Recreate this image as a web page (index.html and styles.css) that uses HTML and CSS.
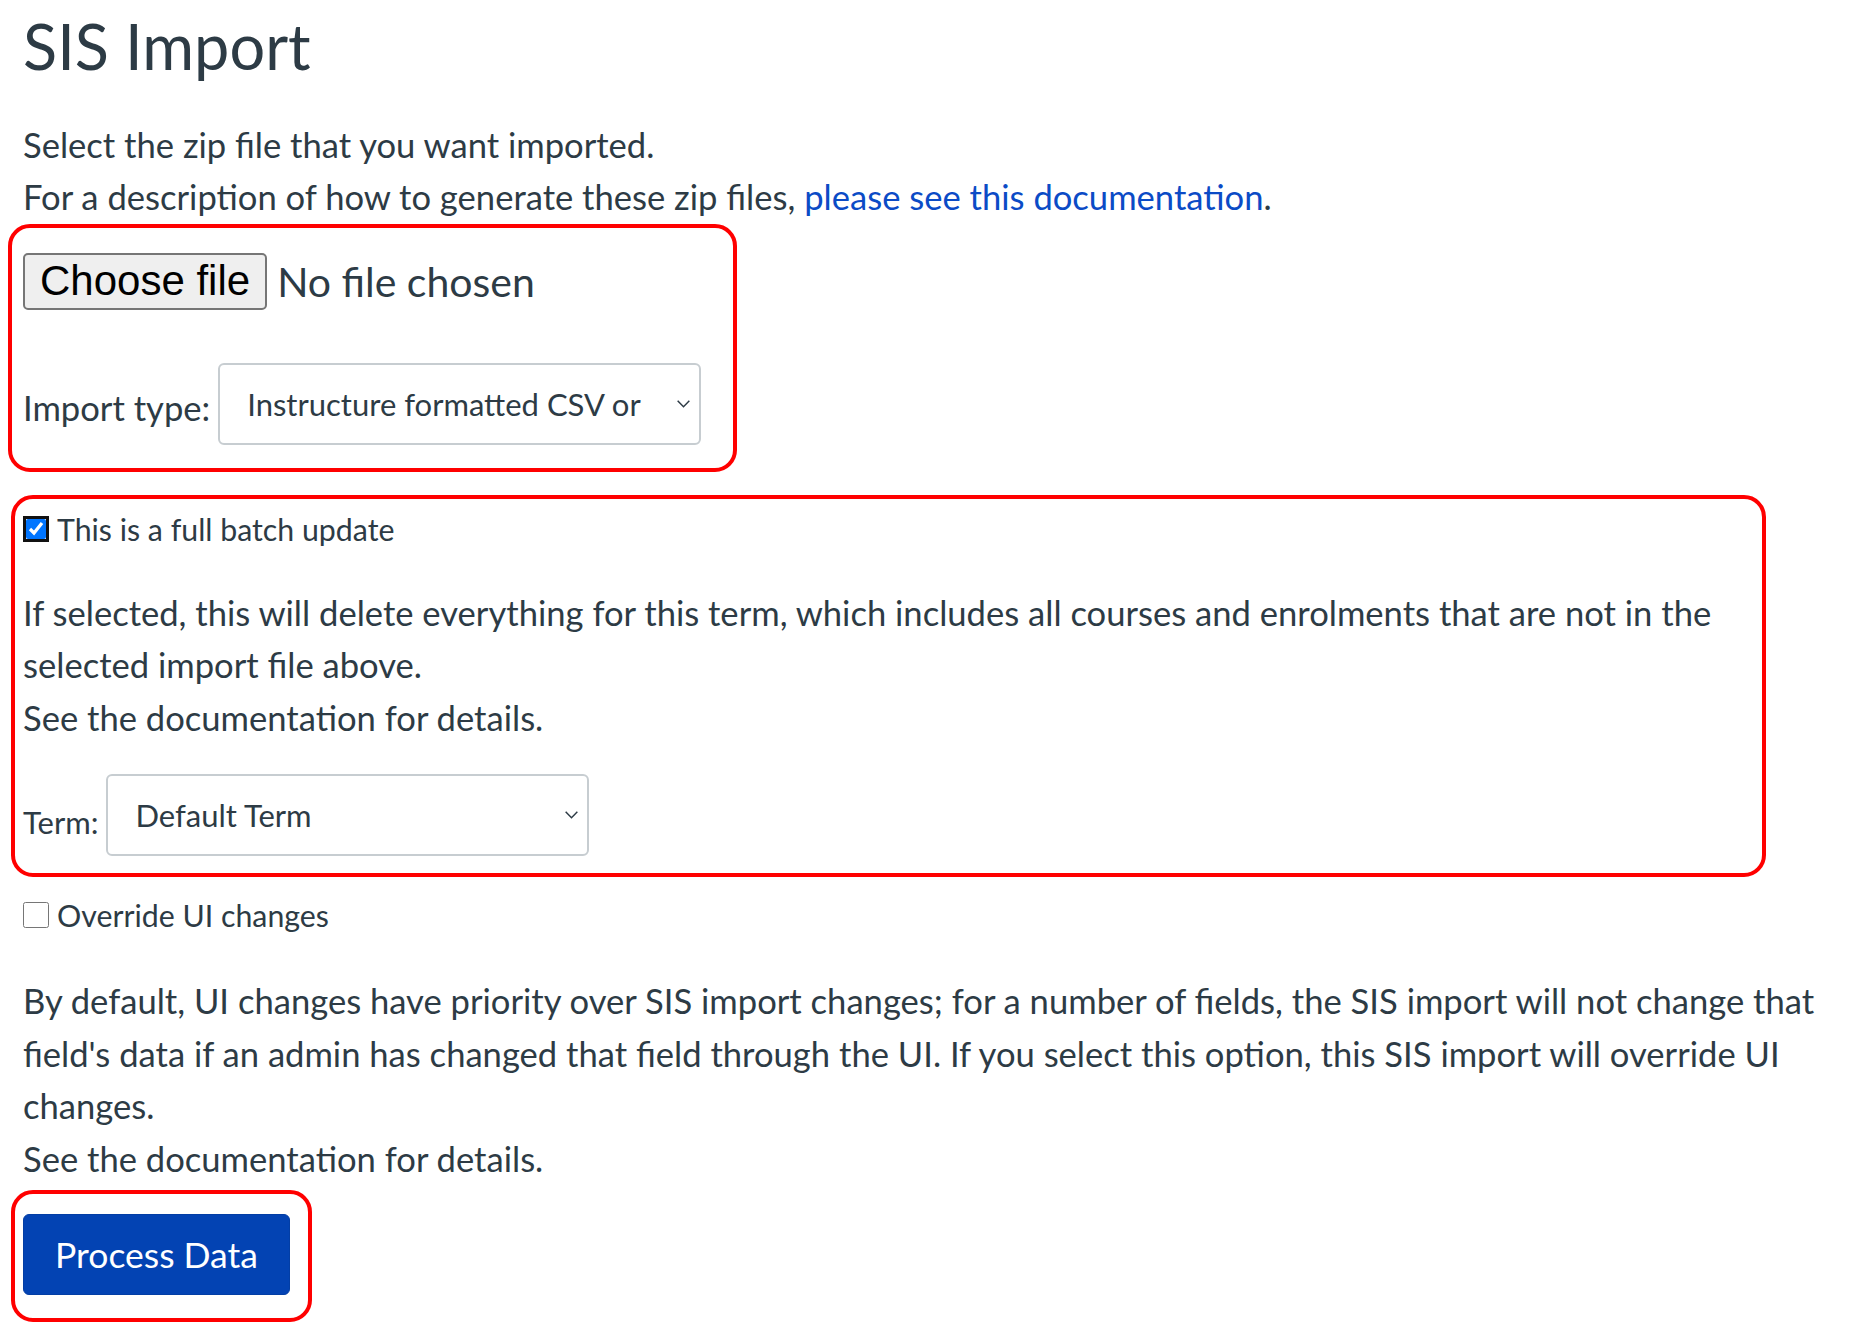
FILE: index.html
```html
<!DOCTYPE html>
<html lang="en">

<head>
    <meta charset="UTF-8">
    <meta name="viewport" content="width=device-width, initial-scale=1.0">
    <title>SIS Import</title>
    <link rel="stylesheet" href="styles.css">
</head>

<body>
    <main class="sis-import">
        <h1 class="page-title">SIS Import</h1>
        <p class="intro">
            Select the zip file that you want imported.<br>
            For a description of how to generate these zip files, <a class="doc-link" href="#">please see this documentation</a>.
        </p>

        <form id="sisImportForm">
            <!-- arquivo e tipo -->
            <div class="callout callout-file">
                <div class="file-row">
                    <button type="button" class="file-button">Choose file</button>
                    <span class="file-status">No file chosen</span>
                </div>
                <div class="field-row field-row-import">
                    <label class="field-label" for="import_type">Import type:</label>
                    <span class="select-wrap select-import">
                        <select id="import_type" class="select-box">
                            <option>Instructure formatted CSV or zip file of CSVs</option>
                        </select>
                        <svg class="chevron" viewBox="0 0 16 16"><path d="M2.5 5.5 8 11l5.5-5.5"/></svg>
                    </span>
                </div>
            </div>

            <!-- batch -->
            <div class="callout callout-batch">
                <label class="check-row">
                    <input type="checkbox" class="check check-on" checked>
                    This is a full batch update
                </label>
                <p class="help-text">
                    If selected, this will delete everything for this term, which includes all courses and enrolments that are not in the selected import file above.<br>
                    See the documentation for details.
                </p>
                <div class="field-row field-row-term">
                    <label class="field-label field-label-small" for="batch_term">Term:</label>
                    <span class="select-wrap select-term">
                        <select id="batch_term" class="select-box">
                            <option>Default Term</option>
                        </select>
                        <svg class="chevron" viewBox="0 0 16 16"><path d="M2.5 5.5 8 11l5.5-5.5"/></svg>
                    </span>
                </div>
            </div>

            <label class="check-row check-row-override">
                <input type="checkbox" class="check">
                Override UI changes
            </label>
            <p class="help-text help-override">
                By default, UI changes have priority over SIS import changes; for a number of fields, the SIS import will not change that field's data if an admin has changed that field through the UI. If you select this option, this SIS import will override UI changes.<br>
                See the documentation for details.
            </p>

            <div class="callout callout-submit">
                <button type="submit" class="btn-primary">Process Data</button>
            </div>
        </form>
    </main>
</body>

</html>
```

FILE: styles.css
```css
:root {
    --textColor: #2d3b45;
    --linkColor: #0b4bc6;
    --brandColor: #0343b3;
    --borderColor: #c7cdd1;
    --markColor: #ff0000;
}

body {
    margin: 8px;
    background-color: #ffffff;
    color: var(--textColor);
    font-family: Lato, "Noto Sans", sans-serif;
    font-size: 34.6px;
    line-height: 52.5px;
}

.sis-import {
    padding-left: 15px;
}

.page-title {
    margin: 0;
    font-size: 63px;
    font-weight: 400;
    line-height: 1.2;
}

.intro {
    margin: 35px 0 0;
}

.doc-link {
    color: var(--linkColor);
    text-decoration: none;
}

form {
    margin: 0;
}

/* caixas vermelhas */
.callout {
    border: 4px solid var(--markColor);
    border-radius: 22px;
}

.callout-file {
    width: 699px;
    margin: 0 0 0 -15px;
    padding: 25px 11px 23px;
}

.callout-batch {
    width: 1731px;
    margin: 23px 0 0 -12px;
    padding: 10px 8px 17px;
}

.callout-submit {
    width: 267px;
    margin: 5px 0 0 -12px;
    padding: 20px 18px 23px 8px;
}

/* arquivo */
.file-row {
    display: flex;
    align-items: center;
    gap: 10px;
    height: 57px;
}

.file-button {
    box-sizing: border-box;
    height: 57px;
    padding: 0 15px;
    border: 2px solid #767676;
    border-radius: 5px;
    background-color: #efefef;
    color: #000000;
    font-family: "Liberation Sans", Arial, sans-serif;
    font-size: 42px;
}

.file-status {
    font-size: 41px;
    line-height: 57px;
}

/* campos */
.field-row {
    display: flex;
    align-items: center;
    gap: 8px;
}

.field-row-import {
    margin-top: 53px;
}

.field-row-term {
    margin-top: 30px;
}

.field-label {
    padding-top: 10px;
}

.field-label-small {
    font-size: 31px;
    padding-top: 14px;
}

.select-wrap {
    position: relative;
    display: block;
}

.select-box {
    box-sizing: border-box;
    height: 82px;
    padding: 0 56px 0 27px;
    border: 2px solid var(--borderColor);
    border-radius: 6px;
    background-color: #ffffff;
    color: var(--textColor);
    font-family: Lato, "Noto Sans", sans-serif;
    font-size: 31px;
    appearance: none;
    -webkit-appearance: none;
}

.select-import .select-box {
    width: 483px;
}

.select-term .select-box {
    width: 483px;
}

.chevron {
    position: absolute;
    right: 9px;
    top: 32px;
    width: 17px;
    height: 17px;
    fill: none;
    stroke: var(--textColor);
    stroke-width: 1.4;
}

/* checkbox */
.check-row {
    display: flex;
    align-items: center;
    gap: 8px;
    font-size: 30.3px;
    line-height: 40px;
}

.check {
    width: 26px;
    height: 26px;
    margin: 0;
}

.check-on {
    width: 20px;
    height: 20px;
    margin: 0 3px;
    accent-color: #0075ff;
    outline: 3px solid #111111;
    outline-offset: 0;
    border-radius: 4px;
}

.help-text {
    margin: 38px 0 0;
}

.check-row-override {
    margin-top: 18px;
}

.help-override {
    margin-top: 40px;
}

.btn-primary {
    width: 267px;
    height: 81px;
    border: 1px solid #033ea5;
    border-radius: 6px;
    background-color: var(--brandColor);
    color: #ffffff;
    font-family: Lato, "Noto Sans", sans-serif;
    font-size: 35.5px;
}
```
